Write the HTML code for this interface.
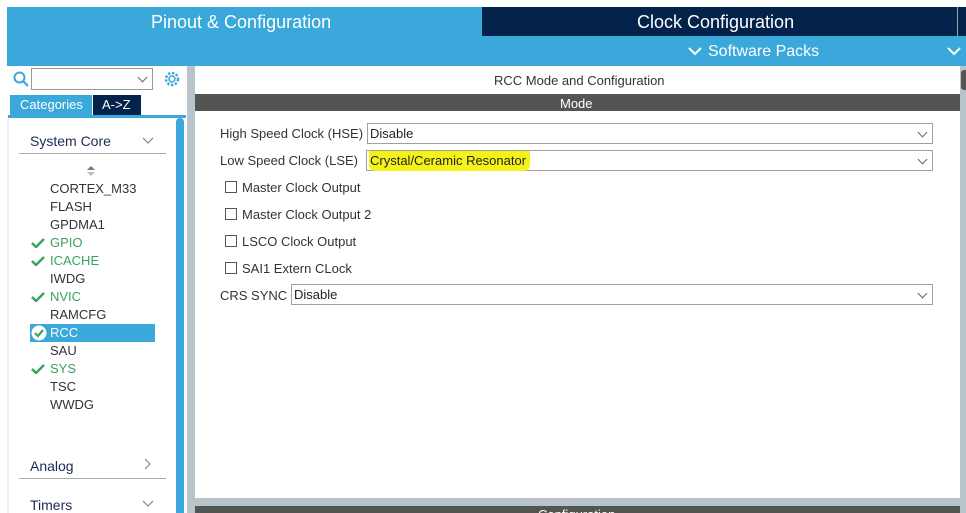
<!DOCTYPE html>
<html><head><style>
*{margin:0;padding:0;box-sizing:border-box}
body{width:966px;height:513px;overflow:hidden;background:#fff;position:relative;font-family:"Liberation Sans",Arial,sans-serif;font-size:13px;color:#333}
.a{position:absolute}
.t{position:absolute;white-space:nowrap}
.sel{position:absolute;border:1px solid #a0a0a0;background:#fff;height:21px;padding:2px 0 0 2px;font-size:13px;color:#222}
.chev{position:absolute;right:6px;top:5px;width:7px;height:7px;border-right:1px solid #666;border-bottom:1px solid #666;transform:rotate(45deg)}
.cb{position:absolute;width:12px;height:12px;border:1px solid #555;background:#fff}
.li{position:absolute;left:50px;font-size:13px;color:#333}
.g{color:#3aa35f}
.ck{position:absolute;left:31px;width:14px;height:10px}
</style></head><body>
<div class="a" style="left:7px;top:7px;width:475px;height:59px;background:#3aa8db"></div>
<div class="t" style="left:151px;top:12px;font-size:18px;color:#fff">Pinout &amp; Configuration</div>
<div class="a" style="left:482px;top:7px;width:475px;height:29px;background:#03234b"></div>
<div class="a" style="left:957px;top:7px;width:9px;height:29px;background:#03234b;border-left:1px solid #8aa"></div>
<div class="t" style="left:637px;top:12px;font-size:18px;color:#fff">Clock Configuration</div>
<div class="a" style="left:482px;top:36px;width:484px;height:30px;background:#3aa8db"></div>
<svg class="a" style="left:688px;top:46px" width="14" height="10"><path d="M1 2 L7 8 L13 2" stroke="#fff" stroke-width="2" fill="none"/></svg>
<div class="t" style="left:708px;top:43px;font-size:16px;color:#fff">Software Packs</div>
<svg class="a" style="left:947px;top:46px" width="14" height="10"><path d="M1 2 L7 8 L13 2" stroke="#fff" stroke-width="2" fill="none"/></svg>

<!-- left panel -->
<svg class="a" style="left:13px;top:71px" width="16" height="16"><circle cx="6.5" cy="6.5" r="5" stroke="#3aa8db" stroke-width="2" fill="none"/><path d="M10 10 L15 15" stroke="#3aa8db" stroke-width="2.2"/></svg>
<div class="a" style="left:31px;top:68px;width:122px;height:22px;border:1px solid #999;background:#fff"><div class="chev" style="top:5px"></div></div>
<svg class="a" style="left:163px;top:70px" width="18" height="18"><circle cx="9" cy="9" r="6" stroke="#3aa8db" stroke-width="2.5" fill="none" stroke-dasharray="2.4 1.6"/><circle cx="9" cy="9" r="3" stroke="#3aa8db" stroke-width="1.5" fill="none"/></svg>
<div class="a" style="left:10px;top:95px;width:82px;height:20px;background:#3aa8db;color:#fff;font-size:13px;padding:2px 0 0 10px">Categories</div>
<div class="a" style="left:93px;top:95px;width:48px;height:20px;background:#03234b;color:#fff;font-size:13px;padding:2px 0 0 9px">A-&gt;Z</div>
<div class="a" style="left:8px;top:115px;width:178px;height:3px;background:#3aa8db"></div>
<div class="a" style="left:7px;top:118px;width:2px;height:395px;background:#eee"></div>
<div class="a" style="left:176px;top:118px;width:8px;height:395px;background:#3aa8db;border-radius:4px 4px 0 0"></div>
<div class="a" style="left:187px;top:66px;width:8px;height:447px;background:#b9c3ca"></div>

<div class="t" style="left:30px;top:133px;font-size:14px;color:#1d2a55">System Core</div>
<svg class="a" style="left:142px;top:137px" width="12" height="8"><path d="M1 1 L6 6 L11 1" stroke="#777" fill="none"/></svg>
<div class="a" style="left:19px;top:153px;width:147px;height:1px;background:#aaa"></div>
<svg class="a" style="left:87px;top:165px" width="8" height="12"><path d="M0 5 L4 1 L8 5Z" fill="#777"/><path d="M0 7 L4 11 L8 7Z" fill="#bbb"/></svg>
<div class="li" style="top:181px">CORTEX_M33</div>
<div class="li" style="top:199px">FLASH</div>
<div class="li" style="top:217px">GPDMA1</div>
<svg class="ck" style="top:238px"><path d="M1 5 L5 9 L13 1" stroke="#3aa35f" stroke-width="2.5" fill="none"/></svg>
<div class="li g" style="top:235px">GPIO</div>
<svg class="ck" style="top:256px"><path d="M1 5 L5 9 L13 1" stroke="#3aa35f" stroke-width="2.5" fill="none"/></svg>
<div class="li g" style="top:253px">ICACHE</div>
<div class="li" style="top:271px">IWDG</div>
<svg class="ck" style="top:292px"><path d="M1 5 L5 9 L13 1" stroke="#3aa35f" stroke-width="2.5" fill="none"/></svg>
<div class="li g" style="top:289px">NVIC</div>
<div class="li" style="top:307px">RAMCFG</div>
<div class="a" style="left:30px;top:324px;width:125px;height:18px;background:#3aa8db"></div>
<svg class="a" style="left:31px;top:325px" width="16" height="16"><circle cx="8" cy="8" r="7.5" fill="#fff"/><path d="M4 8 L7 11 L12 5" stroke="#3aa35f" stroke-width="2.2" fill="none"/></svg>
<div class="li" style="top:325px;color:#fff">RCC</div>
<div class="li" style="top:343px">SAU</div>
<svg class="ck" style="top:364px"><path d="M1 5 L5 9 L13 1" stroke="#3aa35f" stroke-width="2.5" fill="none"/></svg>
<div class="li g" style="top:361px">SYS</div>
<div class="li" style="top:379px">TSC</div>
<div class="li" style="top:397px">WWDG</div>
<div class="t" style="left:30px;top:458px;font-size:14px;color:#1d2a55">Analog</div>
<svg class="a" style="left:144px;top:458px" width="8" height="12"><path d="M1 1 L6 6 L1 11" stroke="#777" fill="none"/></svg>
<div class="a" style="left:19px;top:478px;width:147px;height:1px;background:#aaa"></div>
<div class="t" style="left:30px;top:497px;font-size:14px;color:#1d2a55">Timers</div>
<svg class="a" style="left:142px;top:500px" width="12" height="8"><path d="M1 1 L6 6 L11 1" stroke="#777" fill="none"/></svg>

<!-- main -->
<div class="t" style="left:494px;top:73px;font-size:13px;color:#333">RCC Mode and Configuration</div>
<div class="a" style="left:195px;top:94px;width:766px;height:17px;background:#535554"></div>
<div class="t" style="left:560px;top:96px;font-size:13px;color:#fff">Mode</div>
<div class="a" style="left:960px;top:66px;width:6px;height:447px;background:#b9c3ca"></div>
<div class="a" style="left:961px;top:70px;width:5px;height:20px;background:#555;border-radius:3px 0 0 3px"></div>

<div class="t" style="left:220px;top:126px">High Speed Clock (HSE)</div>
<div class="sel" style="left:367px;top:123px;width:566px">Disable<div class="chev"></div></div>
<div class="t" style="left:220px;top:153px">Low Speed Clock (LSE)</div>
<div class="sel" style="left:366px;top:150px;width:567px"><span style="background:#f3f31a;padding:2px 4px 3px 1px;border-radius:0 0 6px 6px">Crystal/Ceramic Resonator</span><div class="chev"></div></div>
<div class="cb" style="left:225px;top:181px"></div><div class="t" style="left:242px;top:180px">Master Clock Output</div>
<div class="cb" style="left:225px;top:208px"></div><div class="t" style="left:242px;top:207px">Master Clock Output 2</div>
<div class="cb" style="left:225px;top:235px"></div><div class="t" style="left:242px;top:234px">LSCO Clock Output</div>
<div class="cb" style="left:225px;top:262px"></div><div class="t" style="left:242px;top:261px">SAI1 Extern CLock</div>
<div class="t" style="left:220px;top:288px">CRS SYNC</div>
<div class="sel" style="left:291px;top:284px;width:642px">Disable<div class="chev"></div></div>

<div class="a" style="left:195px;top:498px;width:765px;height:8px;background:#b9c3ca"></div>
<div class="a" style="left:195px;top:506px;width:765px;height:7px;background:#535554;overflow:hidden"><div class="t" style="left:343px;top:1px;color:#fff;font-size:13px">Configuration</div></div>
</body></html>
